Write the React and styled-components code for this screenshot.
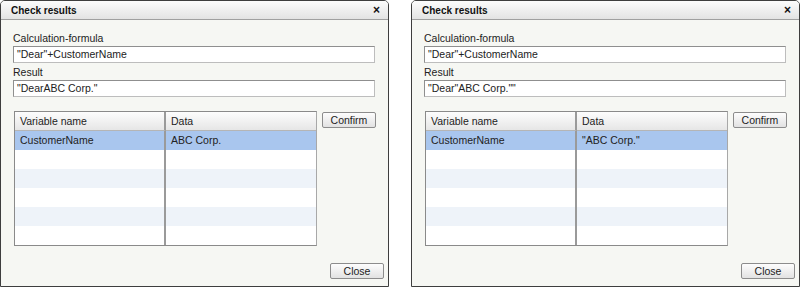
import styled, { createGlobalStyle } from "styled-components";

const GlobalStyle = createGlobalStyle`
  html, body {
    margin: 0;
    padding: 0;
    background: #fff;
  }
  body {
    font-family: "Liberation Sans", Arial, sans-serif;
    font-size: 10.5px;
    color: #222;
  }
`;

const dialogs = [
  {
    formula: '"Dear"+CustomerName',
    result: '"DearABC Corp."',
    rows: [{ name: "CustomerName", data: "ABC Corp." }],
  },
  {
    formula: '"Dear"+CustomerName',
    result: '"Dear"ABC Corp.""',
    rows: [{ name: "CustomerName", data: '"ABC Corp."' }],
  },
];

const CheckDialog = ({ formula, result, rows }) => {
  const filled = [...rows];
  while (filled.length < 6) filled.push({ name: "", data: "" });
  return (
    <Dialog>
      <TitleBar>
        <span>Check results</span>
        <CloseX>×</CloseX>
      </TitleBar>
      <Body>
        <Label>Calculation-formula</Label>
        <Field>{formula}</Field>
        <Label>Result</Label>
        <Field>{result}</Field>
        <TableRow>
          <Grid>
            <HeadCell>Variable name</HeadCell>
            <HeadCell $last>Data</HeadCell>
            {filled.map((r, i) => [
              <Cell key={"n" + i} $idx={i}>{r.name}</Cell>,
              <Cell key={"d" + i} $idx={i} $last>{r.data}</Cell>,
            ])}
          </Grid>
          <SmallButton>Confirm</SmallButton>
        </TableRow>
        <Footer>
          <SmallButton>Close</SmallButton>
        </Footer>
      </Body>
    </Dialog>
  );
};

const App = () => (
  <>
    <GlobalStyle />
    <Page>
      {dialogs.map((d, i) => (
        <CheckDialog key={i} {...d} />
      ))}
    </Page>
  </>
);

const Page = styled.div`
  display: flex;
  gap: 22px;
  width: 800px;
  height: 287px;
`;

const Dialog = styled.div`
  width: 389px;
  height: 287px;
  box-sizing: border-box;
  border: 1px solid #3e3e3e;
  border-radius: 5px 5px 0 0;
  background: #f6f7f3;
  display: flex;
  flex-direction: column;
  overflow: hidden;
`;

const TitleBar = styled.div`
  height: 18px;
  flex: none;
  border-bottom: 1px solid #a0a0a0;
  background: linear-gradient(#fcfcfc, #e3e3e3);
  display: flex;
  align-items: center;
  justify-content: space-between;
  padding: 0 8px 0 10px;
  font-weight: bold;
  font-size: 10px;
  color: #111;
`;

const CloseX = styled.span`
  font-size: 12px;
  font-weight: bold;
  line-height: 1;
  margin-top: -1px;
`;

const Body = styled.div`
  flex: 1;
  display: flex;
  flex-direction: column;
  padding: 11px 12px 0 12px;
`;

const Label = styled.div`
  height: 14px;
  line-height: 14px;
  margin-bottom: 1px;
  & + div + & {
    margin-top: 2px;
  }
`;

const Field = styled.div`
  height: 15px;
  line-height: 15px;
  box-sizing: content-box;
  border: 1px solid #bdbdbd;
  border-top-color: #8f8f8f;
  border-left-color: #8f8f8f;
  background: #fff;
  padding: 0 0 0 3px;
  width: 357px;
`;

const TableRow = styled.div`
  display: flex;
  align-items: flex-start;
  gap: 5px;
  margin-top: 14px;
  padding-left: 1px;
`;

const Grid = styled.div`
  width: 301px;
  display: grid;
  grid-template-columns: 151px 1fr;
  grid-auto-rows: 19px;
  border: 1px solid #8a8a8a;
  border-right-color: #a8a8a8;
  background: #fff;
`;

const HeadCell = styled.div`
  background: linear-gradient(#fdfdfd, #e6e6e6);
  border-bottom: 1px solid #b5b5b5;
  border-right: ${(p) => (p.$last ? "none" : "2px solid #9a9a9a")};
  padding-left: 5px;
  line-height: 18px;
`;

const Cell = styled.div`
  background: ${(p) =>
    p.$idx === 0 ? "#a9c6ee" : p.$idx % 2 === 0 ? "#eef3f9" : "#fff"};
  border-right: ${(p) => (p.$last ? "none" : "2px solid #9a9a9a")};
  padding-left: 5px;
  line-height: 19px;
`;

const SmallButton = styled.button`
  width: 54px;
  height: 16px;
  padding: 0;
  border: 1px solid #8c8c8c;
  border-radius: 2px;
  background: linear-gradient(#fdfdfd, #e2e2e2);
  font-family: inherit;
  font-size: 10.5px;
  color: #222;
  line-height: 14px;
  margin-top: 1px;
`;

const Footer = styled.div`
  margin-top: auto;
  margin-right: -8px;
  display: flex;
  justify-content: flex-end;
  padding: 0 0 7px 0;
`;

export default App;
